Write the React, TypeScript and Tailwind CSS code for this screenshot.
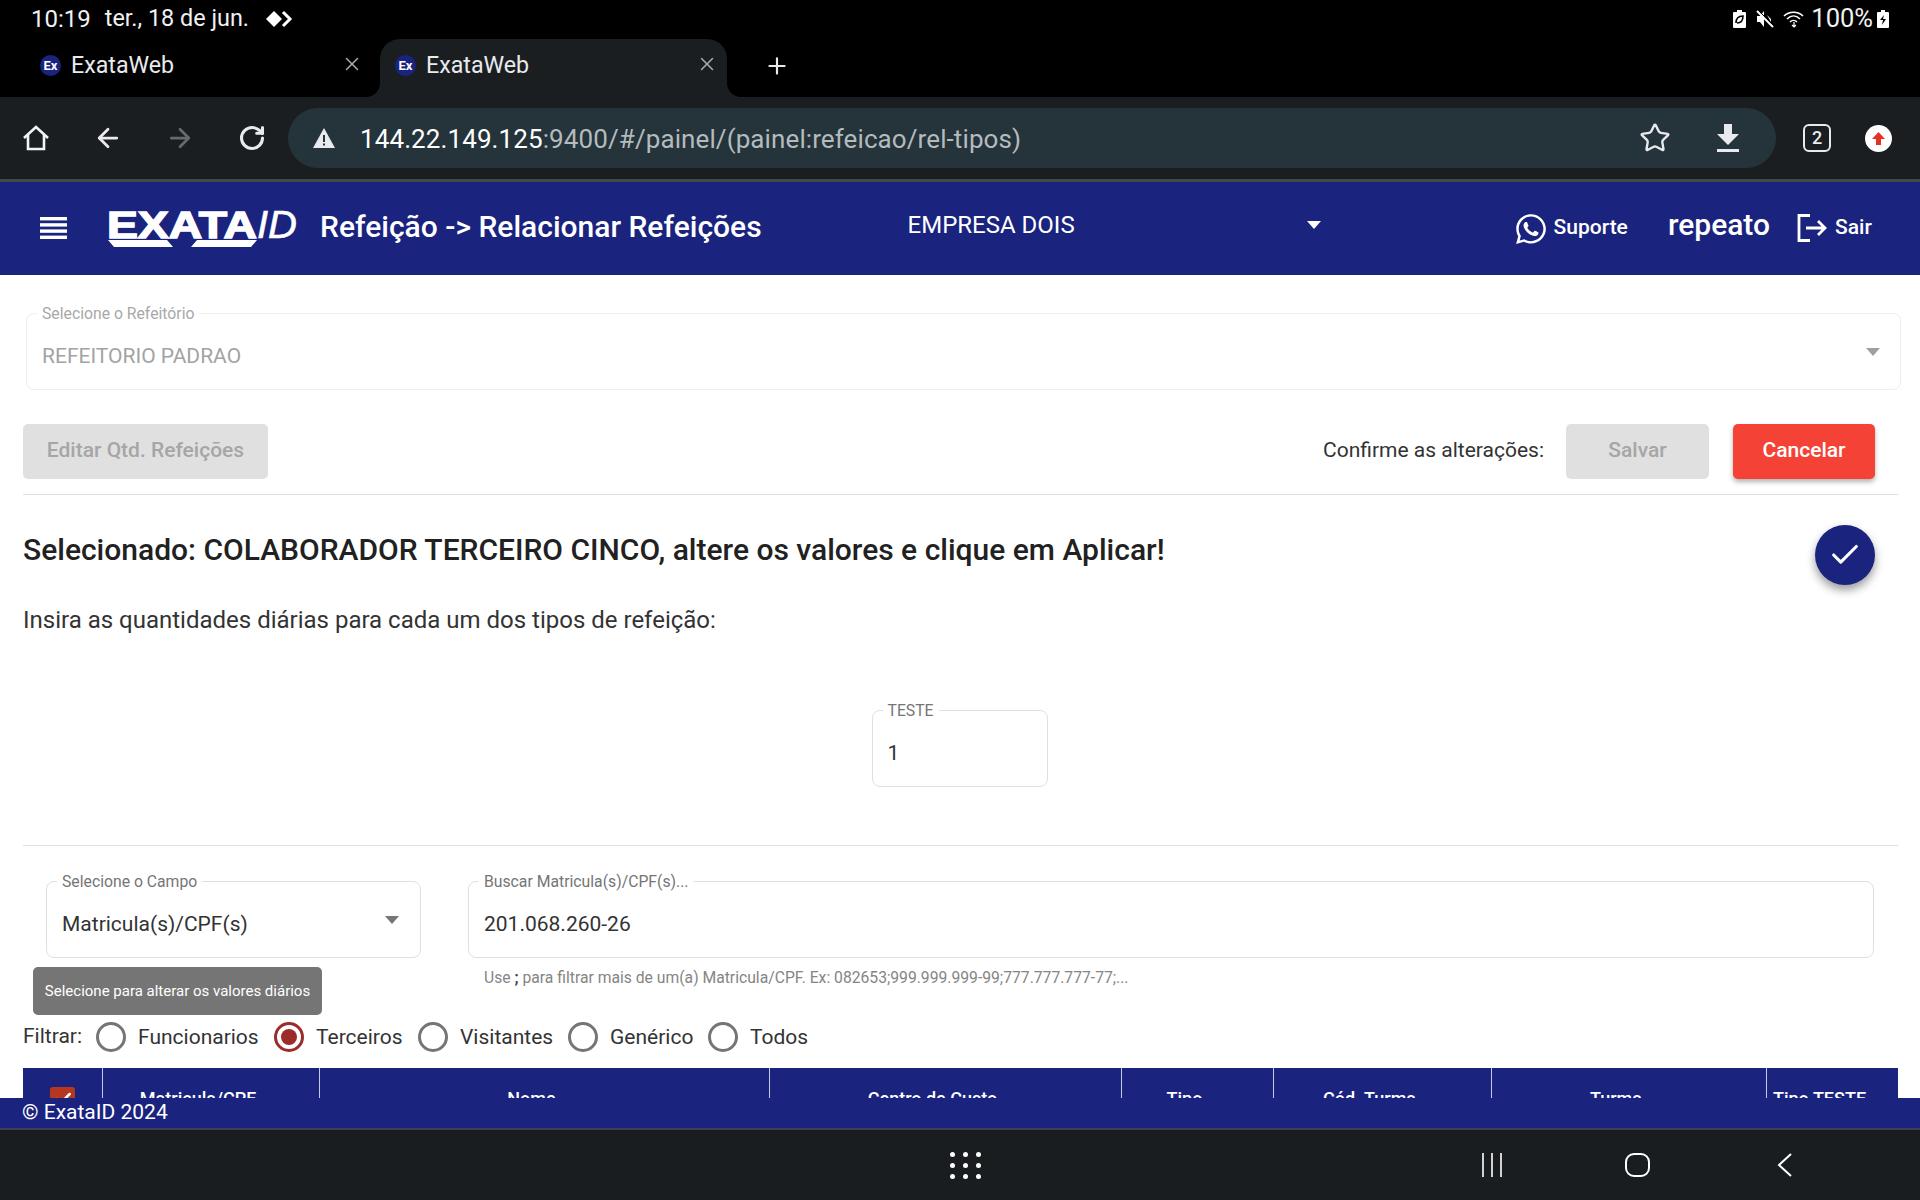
import React from "react";
import { X, Plus, Star, ArrowLeft, ArrowRight, RotateCw, Check } from "lucide-react";
import { FaWhatsapp } from "react-icons/fa";

const cols = [
  { t: "", w: "w-[80px]", p: "" },
  { t: "Matricula/CPF", w: "w-[217px]", p: "pr-[26px]" },
  { t: "Nome", w: "w-[450px]", p: "pr-[26px]" },
  { t: "Centro de Custo", w: "w-[352px]", p: "pr-[26px]" },
  { t: "Tipo", w: "w-[152px]", p: "pr-[26px]" },
  { t: "Cód. Turma", w: "w-[218px]", p: "pr-[26px]" },
  { t: "Turma", w: "w-[275px]", p: "pr-[26px]" },
  { t: "Tipo TESTE", w: "flex-1", p: "pr-[26px]" },
];

function Favicon() {
  return (
    <span className="w-[21px] h-[21px] rounded-full bg-[#1a237e] flex items-center justify-center text-white text-[13px] font-bold leading-none shrink-0">
      Ex
    </span>
  );
}

function Tab({ active }: { active?: boolean }) {
  return (
    <div className={`relative h-[58px] flex items-center rounded-t-[20px] ${active ? "w-[347px] bg-[#1b1e21]" : "w-[380px]"}`}>
      <div className={`${active ? "ml-[15px]" : "ml-[40px]"} mb-[5px] flex items-center gap-[10px]`}>
        <Favicon />
        <span className="text-[23.2px] text-[#e8eaed] leading-none">ExataWeb</span>
      </div>
      <X className={`absolute top-[14px] text-[#a9adb0] ${active ? "right-[9px]" : "right-[17px]"}`} size={22} strokeWidth={1.6} />
      {active && (
        <>
          <svg className="absolute -left-[14px] bottom-0" width="14" height="14" viewBox="0 0 14 14"><path d="M14 0V14H0A14 14 0 0 0 14 0Z" fill="#1b1e21" /></svg>
          <svg className="absolute -right-[14px] bottom-0" width="14" height="14" viewBox="0 0 14 14"><path d="M0 0V14H14A14 14 0 0 1 0 0Z" fill="#1b1e21" /></svg>
        </>
      )}
    </div>
  );
}

function Field({ label, className, muted, children }: { label: string; className: string; muted?: boolean; children: React.ReactNode }) {
  return (
    <div className={`relative h-[77px] rounded-[8px] border ${muted ? "border-[#eeeeee]" : "border-[#e0e0e0]"} flex items-center pl-[15px] pr-[15px] pt-[9px] ${className}`}>
      <span className={`absolute -top-[10px] left-[10px] bg-white px-[5px] text-[15.75px] leading-[20px] whitespace-nowrap ${muted ? "text-[#a8a8a8]" : "text-[#757575]"}`}>
        {label}
      </span>
      {children}
    </div>
  );
}

function Caret({ cls }: { cls: string }) {
  return (
    <svg className={cls} width="14" height="8" viewBox="0 0 14 8"><path d="M0 0H14L7 8Z" fill="currentColor" /></svg>
  );
}

function Radio({ label, on, w }: { label: string; on?: boolean; w: string }) {
  return (
    <div className={`flex items-center gap-[12px] ${w}`}>
      <span className={`w-[30px] h-[30px] rounded-full border-[3px] flex items-center justify-center shrink-0 ${on ? "border-[#9c2b2b]" : "border-[#757575]"}`}>
        {on && <span className="w-[16px] h-[16px] rounded-full bg-[#9c2b2b]" />}
      </span>
      <span className="text-[21px] text-[#333333] leading-none whitespace-nowrap">{label}</span>
    </div>
  );
}

export default function App() {
  return (
    <div className="w-[1920px] h-[1200px] flex flex-col overflow-hidden bg-white" style={{ fontFamily: "Roboto, 'Noto Sans', sans-serif" }}>
      {/* status bar */}
      <div className="h-[39px] bg-black flex items-center pl-[31px] pr-[31px] pb-[2px] text-[#f1f1f1] shrink-0">
        <span className="text-[24px] leading-none">10:19</span>
        <span className="text-[23.4px] leading-none ml-[14px]">ter., 18 de jun.</span>
        <svg className="ml-[16px]" width="28" height="18" viewBox="0 0 28 18">
          <path d="M9 1L17 9L9 17L1 9Z" fill="#fff" />
          <path d="M18 2L25 9L18 16" fill="none" stroke="#fff" strokeWidth="3" />
        </svg>
        <div className="ml-auto flex items-center">
          <svg width="13" height="18" viewBox="0 0 13 18"><path d="M4 0H9V2H12A1 1 0 0 1 13 3V17A1 1 0 0 1 12 18H1A1 1 0 0 1 0 17V3A1 1 0 0 1 1 2H4Z" fill="#fff" /><path d="M3 13C3 8 6 6 10 6C10 11 8 13 4 13" fill="none" stroke="#000" strokeWidth="1.6" /></svg>
          <svg className="ml-[10px]" width="18" height="18" viewBox="0 0 18 18"><path d="M8 1V17L4 12H1V6H4Z" fill="#fff" /><path d="M11 5L15 9V12Z" fill="#fff" /><path d="M1 1L17 17" stroke="#fff" strokeWidth="2" /><path d="M3 1L18 16" stroke="#000" strokeWidth="1" /></svg>
          <svg className="ml-[9px]" width="22" height="18" viewBox="0 0 22 18" fill="none" stroke="#fff" strokeWidth="1.6"><path d="M1 6C6 1 15 1 20 6" /><path d="M4 9C8 5 13 5 17 9" /><path d="M7 12C9 10 12 10 14 12" /><path d="M11 12V17M9 15L11 17L13 15" strokeWidth="1.2" /></svg>
          <span className="ml-[6px] text-[25.5px] leading-none">100%</span>
          <svg className="ml-[4px]" width="12" height="18" viewBox="0 0 12 18"><path d="M4 0H8V2H11A1 1 0 0 1 12 3V17A1 1 0 0 1 11 18H1A1 1 0 0 1 0 17V3A1 1 0 0 1 1 2H4Z" fill="#fff" /><path d="M7 5L3 10H6L5 15L9 9H6Z" fill="#000" /></svg>
        </div>
      </div>

      {/* tab strip */}
      <div className="h-[58px] bg-black flex items-center shrink-0">
        <Tab />
        <Tab active />
        <Plus className="ml-[37px] mb-[5px] text-[#e8eaed]" size={26} strokeWidth={2} />
      </div>

      {/* toolbar */}
      <div className="h-[85px] bg-[#1b1e21] border-b-[3px] border-[#3f4b44] flex items-center shrink-0 text-[#e8eaed]">
        <div className="w-[72px] flex justify-center">
          <svg width="28" height="28" viewBox="0 0 28 28" fill="none" stroke="#f1f3f4" strokeWidth="2.6"><path d="M2 14L14 3L26 14" /><path d="M6 11V25H22V11" /></svg>
        </div>
        <div className="w-[72px] flex justify-center"><ArrowLeft size={30} strokeWidth={2.2} /></div>
        <div className="w-[72px] flex justify-center text-[#666a6d]"><ArrowRight size={30} strokeWidth={2.2} /></div>
        <div className="w-[72px] flex justify-center"><RotateCw size={28} strokeWidth={2.6} /></div>
        <div className="w-[1488px] h-[60px] rounded-full bg-[#25333a] flex items-center pl-[25px] pr-[36px]">
          <svg width="22" height="20" viewBox="0 0 22 20"><path d="M11 0L22 20H0Z" fill="#e8eaed" /><rect x="10" y="7" width="2" height="7" fill="#25333a" /><rect x="10" y="15.5" width="2" height="2" fill="#25333a" /></svg>
          <span className="ml-[25px] mt-[2px] text-[26px] leading-none whitespace-nowrap text-white tracking-[0.1px]">
            144.22.149.125<span className="text-[#b4bbbe]">:9400/#/painel/(painel:refeicao/rel-tipos)</span>
          </span>
          <Star className="ml-auto" size={32} strokeWidth={1.8} />
          <svg className="ml-[45px]" width="24" height="28" viewBox="0 0 24 28"><path d="M8 0H16V10H23L12 21L1 10H8Z" fill="#e8eaed" /><rect x="1" y="25" width="22" height="3" fill="#e8eaed" /></svg>
        </div>
        <div className="w-[82px] flex justify-center">
          <span className="w-[28px] h-[28px] rounded-[6px] border-[2.5px] border-[#e8eaed] flex items-center justify-center text-[18px] font-medium leading-none">2</span>
        </div>
        <div className="w-[40px] flex justify-center">
          <span className="w-[27px] h-[27px] rounded-full bg-white flex items-center justify-center">
            <svg width="15" height="15" viewBox="0 0 15 15"><path d="M7.5 1L14 8H10V14H5V8H1Z" fill="#e53125" /></svg>
          </span>
        </div>
      </div>

      {/* app header */}
      <header className="h-[93px] bg-[#1a237e] flex items-center text-white shrink-0">
        <svg className="ml-[40px] mb-[2px]" width="27" height="22" viewBox="0 0 27 22" fill="#fff">
          <rect y="0" width="27" height="3.4" /><rect y="6.2" width="27" height="3.4" /><rect y="12.4" width="27" height="3.4" /><rect y="18.6" width="27" height="3.4" />
        </svg>
        <svg className="ml-[40px]" width="191" height="40" viewBox="0 0 191 40">
          <text x="0" y="29" textLength="150" lengthAdjust="spacingAndGlyphs" fill="#fff" stroke="#fff" strokeWidth="1.4" fontFamily="'Liberation Sans', sans-serif" fontWeight="700" fontSize="36">EXATA</text>
          <text x="150" y="29" textLength="40" lengthAdjust="spacingAndGlyphs" fill="#fff" stroke="#fff" strokeWidth="0.6" fontFamily="'Liberation Sans', sans-serif" fontStyle="italic" fontSize="38">ID</text>
          <path d="M1 31H60L66 38H84L90 31H150L144 38H7Z" fill="#fff" />
        </svg>
        <span className="ml-[22px] mb-[3px] text-[30px] font-medium leading-none whitespace-nowrap">Refeição -&gt; Relacionar Refeições</span>
        <span className="ml-[146px] mb-[8px] text-[24px] leading-none w-[399px]">EMPRESA DOIS</span>
        <Caret cls="text-white mb-[8px]" />
        <FaWhatsapp className="ml-[193px]" size={34} />
        <span className="ml-[6px] mb-[3px] text-[21px] font-medium leading-none">Suporte</span>
        <span className="ml-[40px] mb-[8px] text-[30px] font-medium leading-none">repeato</span>
        <svg className="ml-[27px] mb-[1px]" width="31" height="28" viewBox="0 0 31 28" fill="none" stroke="#fff" strokeWidth="2.8"><path d="M13 1.5H2V26.5H13" /><path d="M9 14H28M21 7L28 14L21 21" /></svg>
        <span className="ml-[7px] mb-[3px] text-[21px] font-medium leading-none">Sair</span>
      </header>

      {/* page */}
      <main className="flex-1 min-h-0 overflow-hidden pl-[23px] pr-[22px]">
        <Field label="Selecione o Refeitório" muted className="mt-[38px] ml-[3px] -mr-[3px]">
          <span className="text-[21px] text-[#a3a3a3] leading-none">REFEITORIO PADRAO</span>
          <Caret cls="ml-auto mr-[5px] mb-[8px] text-[#a0a0a0]" />
        </Field>

        <div className="mt-[34px] pb-[15px] border-b border-[#e0e0e0] flex items-center">
          <div className="h-[55px] pb-[2px] w-[245px] rounded-[5px] bg-[#e0e0e0] text-[#a6a6a6] text-[21px] font-medium flex items-center justify-center">Editar Qtd. Refeições</div>
          <span className="ml-auto mb-[2px] text-[21px] text-[#333333]">Confirme as alterações:</span>
          <div className="ml-[22px] h-[55px] pb-[2px] w-[143px] rounded-[5px] bg-[#e0e0e0] text-[#a6a6a6] text-[21px] font-medium flex items-center justify-center">Salvar</div>
          <div className="ml-[24px] mr-[23px] h-[55px] pb-[2px] w-[142px] rounded-[5px] bg-[#f44336] text-white text-[21px] font-medium flex items-center justify-center shadow-[0_3px_5px_rgba(0,0,0,0.3)]">Cancelar</div>
        </div>

        <div className="flex justify-between items-start">
          <h1 className="mt-[35px] text-[30px] font-medium leading-[40px] text-[#212121]">Selecionado: COLABORADOR TERCEIRO CINCO, altere os valores e clique em Aplicar!</h1>
          <div className="mt-[30px] mr-[23px] w-[60px] h-[60px] rounded-full bg-[#1a237e] flex items-center justify-center shadow-[0_5px_10px_rgba(0,0,0,0.4)]">
            <Check className="text-white" size={34} strokeWidth={2.2} />
          </div>
        </div>

        <p className="mt-[19px] text-[24px] leading-[32px] text-[#333333]">Insira as quantidades diárias para cada um dos tipos de refeição:</p>

        <div className="mt-[74px] flex justify-center pr-[2px]">
          <Field label="TESTE" className="w-[176px]">
            <span className="text-[21px] text-[#333333] leading-none">1</span>
          </Field>
        </div>

        <div className="mt-[58px] border-b border-[#e0e0e0]" />

        <div className="relative mt-[35px] flex gap-[47px] pl-[23px] pr-[24px]">
          <Field label="Selecione o Campo" className="w-[375px] shrink-0">
            <span className="text-[21px] text-[#333333] leading-none">Matricula(s)/CPF(s)</span>
            <Caret cls="ml-auto mr-[6px] mb-[8px] text-[#757575]" />
          </Field>
          <div className="flex-1">
            <Field label="Buscar Matricula(s)/CPF(s)...">
              <span className="text-[21px] text-[#333333] leading-none">201.068.260-26</span>
            </Field>
            <p className="mt-[10px] pl-[16px] text-[15.7px] leading-[20px] text-[#858585]">Use <b className="text-[#444444]">;</b> para filtrar mais de um(a) Matricula/CPF. Ex: 082653;999.999.999-99;777.777.777-77;...</p>
          </div>
          <div className="absolute left-[10px] top-[86px] w-[289px] h-[48px] rounded-[5px] bg-[#757575] text-white text-[15px] flex items-center justify-center">Selecione para alterar os valores diários</div>
        </div>

        <div className="mt-[33px] h-[32px] flex items-center">
          <span className="w-[73px] text-[21px] text-[#333333] leading-none mb-[1px]">Filtrar:</span>
          <Radio label="Funcionarios" w="w-[178px]" />
          <Radio label="Terceiros" on w="w-[144px]" />
          <Radio label="Visitantes" w="w-[150px]" />
          <Radio label="Genérico" w="w-[140px]" />
          <Radio label="Todos" w="w-[100px]" />
        </div>

        <div className="mt-[15px] h-[64px] bg-[#1a237e] flex text-white">
          {cols.map((c, i) => (
            <div key={i} className={`${c.w} ${c.p} h-full pb-[4px] flex items-center justify-center text-[18px] font-medium whitespace-nowrap ${i < cols.length - 1 ? "border-r border-[#c5cae9]" : ""}`}>
              {i === 0 ? (
                <span className="mt-[2px] w-[25px] h-[25px] rounded-[3px] bg-[#b5371f] flex items-center justify-center"><Check size={20} strokeWidth={3} /></span>
              ) : c.t}
            </div>
          ))}
        </div>
      </main>

      {/* footer */}
      <footer className="h-[32px] bg-[#1a237e] border-b-[2px] border-[#3c4156] pl-[22px] text-white text-[21px] leading-[28px] shrink-0">© ExataID 2024</footer>

      {/* android nav */}
      <nav className="h-[70px] bg-[#1a1d20] flex items-center shrink-0 text-white">
        <div className="ml-[950px] grid grid-cols-3 gap-x-[8px] gap-y-[6px]">
          {[0,1,2,3,4,5,6,7,8].map((n) => <span key={n} className="w-[5px] h-[5px] rounded-full bg-white" />)}
        </div>
        <svg className="ml-[500px]" width="22" height="24" viewBox="0 0 22 24" stroke="#fff" strokeWidth="1.6"><path d="M2 0V24M11 0V24M20 0V24" /></svg>
        <svg className="ml-[122px]" width="25" height="24" viewBox="0 0 25 24" fill="none" stroke="#fff" strokeWidth="2"><rect x="1" y="1" width="23" height="22" rx="8" /></svg>
        <svg className="ml-[127px]" width="15" height="24" viewBox="0 0 15 24" fill="none" stroke="#fff" strokeWidth="2"><path d="M14 1L2 12L14 23" /></svg>
      </nav>
    </div>
  );
}
